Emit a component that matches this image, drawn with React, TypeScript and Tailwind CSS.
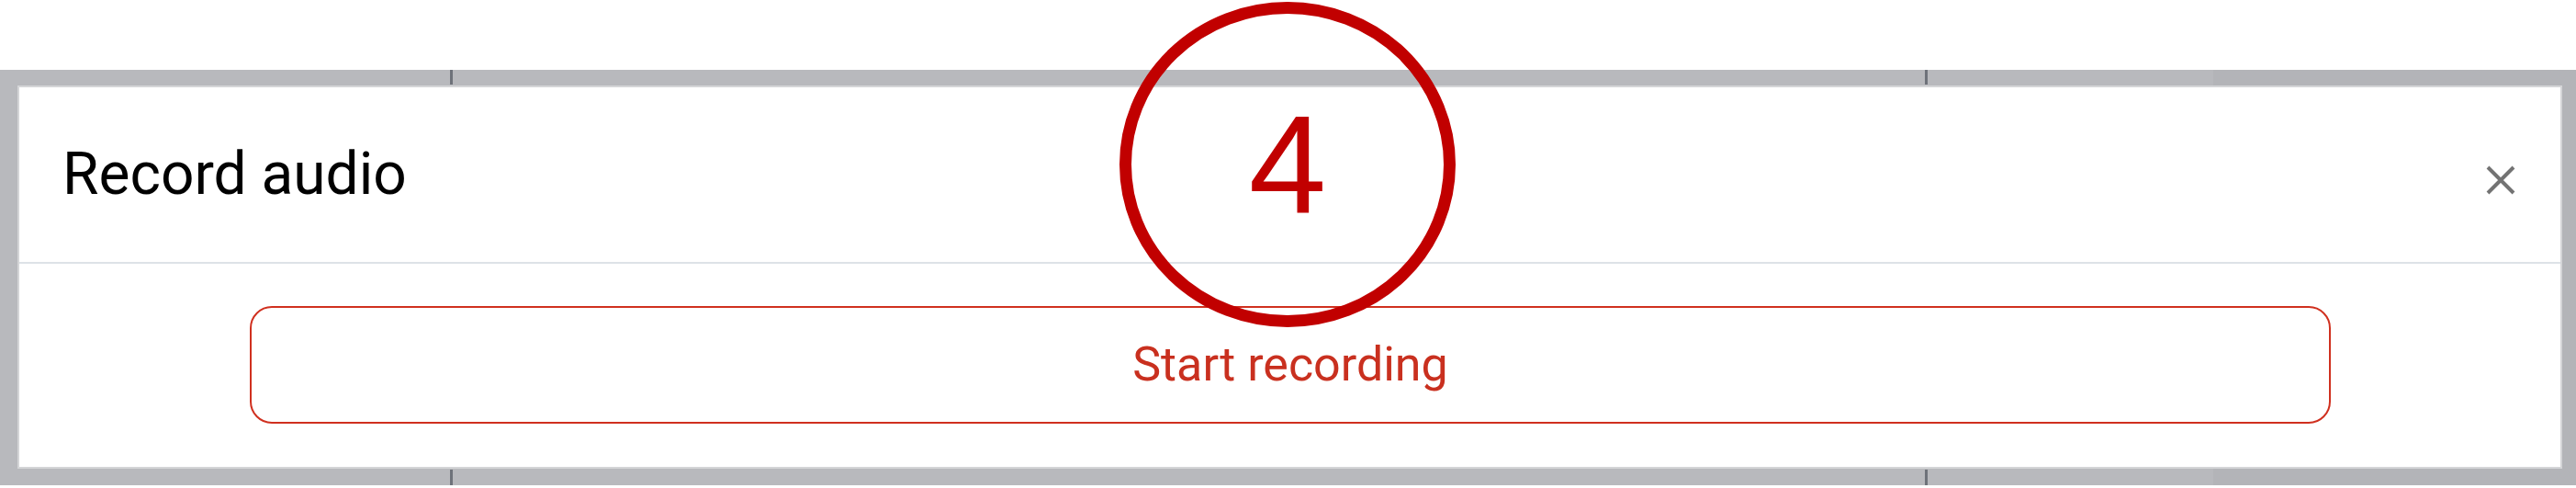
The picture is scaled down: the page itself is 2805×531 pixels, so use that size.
import React from "react";

const ticks = [490, 2096];

const CloseIcon = () => (
  <svg className="w-[32px] h-[32px] mt-[12px]" viewBox="0 0 32 32" fill="none" stroke="#737373" strokeWidth={4}>
    <path d="M2 2L30 30M30 2L2 30" />
  </svg>
);

export default function App() {
  return (
    <div className="relative w-[2805px] h-[531px] overflow-hidden bg-white pt-[76px] font-['Roboto',sans-serif]">
      {/* Device frame */}
      <div className="relative bg-[#b8b9bd] pt-[17px] pl-[19px] pr-[15px] pb-[18px]">
        <div className="absolute top-0 bottom-0 left-[2410px] right-0 bg-[#b3b4b8]" />
        {ticks.map((x) => (
          <React.Fragment key={x}>
            <div className="absolute top-0 w-[3px] h-[16px] bg-[#6e727a]" style={{ left: x }} />
            <div className="absolute bottom-0 w-[3px] h-[17px] bg-[#6e727a]" style={{ left: x }} />
          </React.Fragment>
        ))}

        {/* Dialog */}
        <div className="relative flex flex-col border-2 border-[#d4d5d7] bg-white">
          <div className="flex h-[190px] items-center justify-between pl-[47px] pr-[49px]">
            <h2 className="text-[64px] leading-none text-black">Record audio</h2>
            <CloseIcon />
          </div>
          <div className="h-[2px] bg-[#dde2e7]" />
          <div className="pt-[46px] pb-[47px] pl-[251px] pr-[250px]">
            <button className="flex h-[128px] w-full items-center justify-center rounded-[24px] border-2 border-[#d0301f] text-[52px] leading-none text-[#c9301f]">
              Start recording
            </button>
          </div>
        </div>
      </div>

      {/* Step annotation */}
      <div className="absolute left-[1219px] top-[2px] flex h-[354px] w-[366px] items-center justify-center">
        <svg className="absolute inset-0" width="366" height="354" viewBox="0 0 366 354" fill="none">
          <ellipse cx="183" cy="177" rx="176.5" ry="170.5" stroke="#c10000" strokeWidth={13} />
        </svg>
        <span className="relative text-[152px] leading-none text-[#c10000] font-['Liberation_Sans',Arial,sans-serif]">4</span>
      </div>
    </div>
  );
}
